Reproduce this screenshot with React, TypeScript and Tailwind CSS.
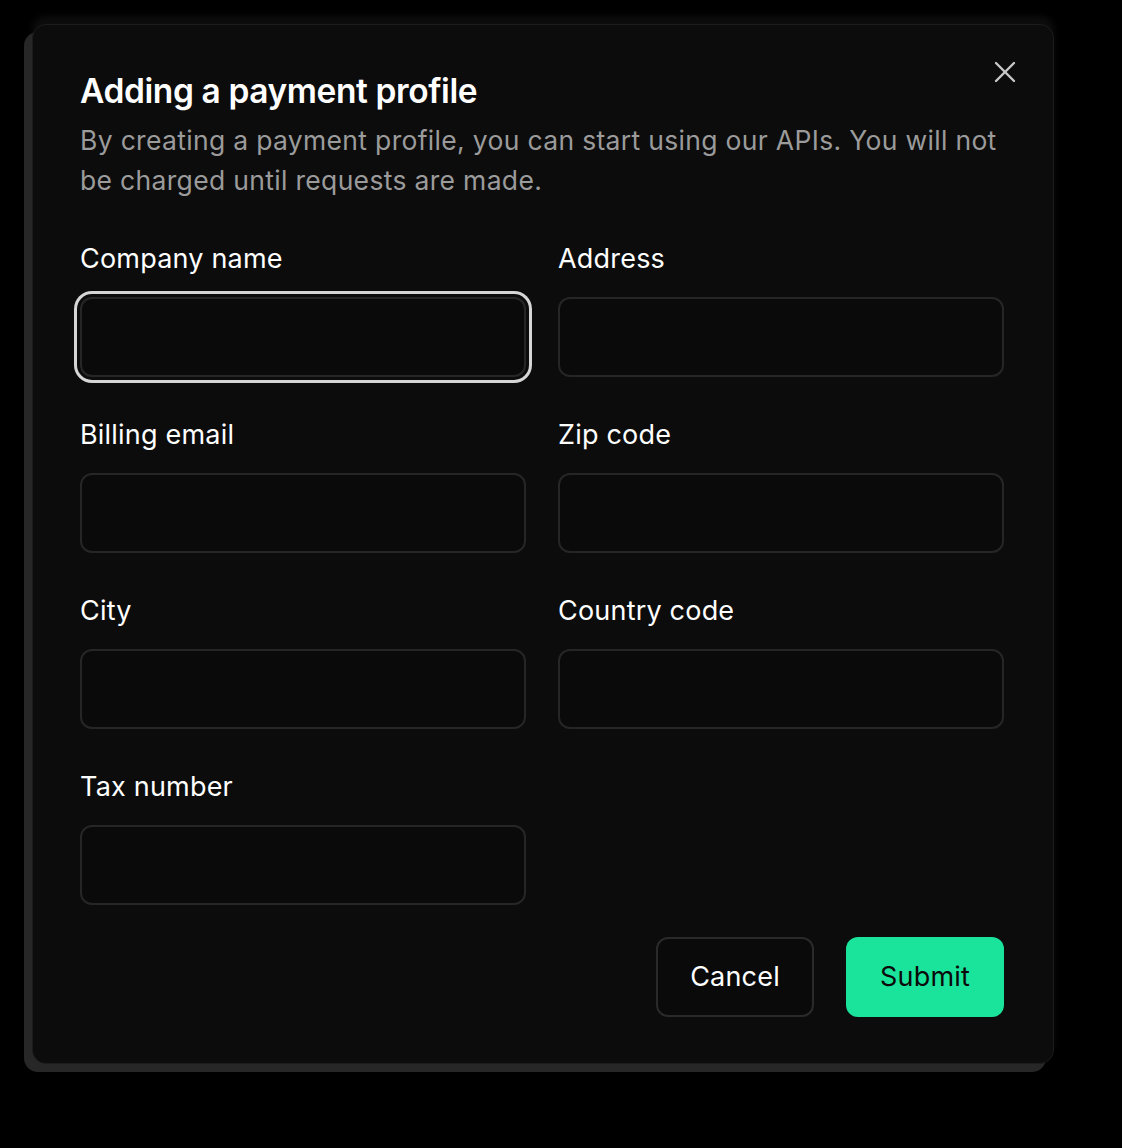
import React, { useState } from 'react';

const fields = [
  { id: 'company', label: 'Company name' },
  { id: 'address', label: 'Address' },
  { id: 'email', label: 'Billing email' },
  { id: 'zip', label: 'Zip code' },
  { id: 'city', label: 'City' },
  { id: 'country', label: 'Country code' },
  { id: 'tax', label: 'Tax number' },
];

const App: React.FC = () => {
  const [values, setValues] = useState<Record<string, string>>({});

  return (
    <div className="min-h-[1148px] w-full bg-black pl-[32px] pt-[24px] font-['Inter',_'Noto_Sans',_sans-serif]">
      <div className="w-[1022px] h-[1040px] rounded-[14px] bg-[#0c0c0c] border border-[#1c1c1c] shadow-[-8px_8px_0_0_#272727,0_-8px_6px_0_#0d0d0d] pl-[47px] pr-[49px] pt-[46px] pb-[47px] flex flex-col relative">
        <button className="absolute top-[32px] right-[33px] text-[#c8c8c8] p-1">
          <svg xmlns="http://www.w3.org/2000/svg" width="22" height="22" viewBox="0 0 22 22" fill="none" stroke="currentColor" strokeWidth="2.4" strokeLinecap="round"><path d="M2 2 20 20" /><path d="M20 2 2 20" /></svg>
        </button>

        <h2 className="text-[33.5px] leading-[40px] font-semibold text-white tracking-[-0.4px]">Adding a payment profile</h2>
        <p className="mt-[9px] text-[26.5px] leading-[40px] text-[#9b9b9b] tracking-[0.32px]">
          By creating a payment profile, you can start using our APIs. You will not be charged until requests are made.
        </p>

        <div className="mt-[41px] grid grid-cols-2 gap-x-[32px] gap-y-[40px]">
          {fields.map((f, i) => (
            <div key={f.id} className="flex flex-col">
              <label className="text-[27px] leading-[36px] font-normal text-white tracking-[0.2px]">{f.label}</label>
              <input
                value={values[f.id] || ''}
                onChange={e => setValues({ ...values, [f.id]: e.target.value })}
                className={`mt-[20px] h-[80px] w-full rounded-[12px] border-2 border-[#262626] bg-[#0a0a0a] px-4 text-white text-[24px] outline-none ${i === 0 ? 'ring-[3px] ring-[#d6d6d6] ring-offset-[3px] ring-offset-[#0c0c0c]' : ''}`}
              />
            </div>
          ))}
        </div>

        <div className="mt-[32px] flex justify-end gap-[32px]">
          <button className="w-[158px] h-[80px] rounded-[12px] border-2 border-[#2a2a2a] bg-[#0a0a0a] text-white text-[27px] font-normal tracking-[0.2px]">
            Cancel
          </button>
          <button className="w-[158px] h-[80px] rounded-[12px] bg-[#1ae39b] text-[#0a0a0a] text-[27px] font-normal tracking-[0.2px]">
            Submit
          </button>
        </div>
      </div>
    </div>
  );
};

export default App;
